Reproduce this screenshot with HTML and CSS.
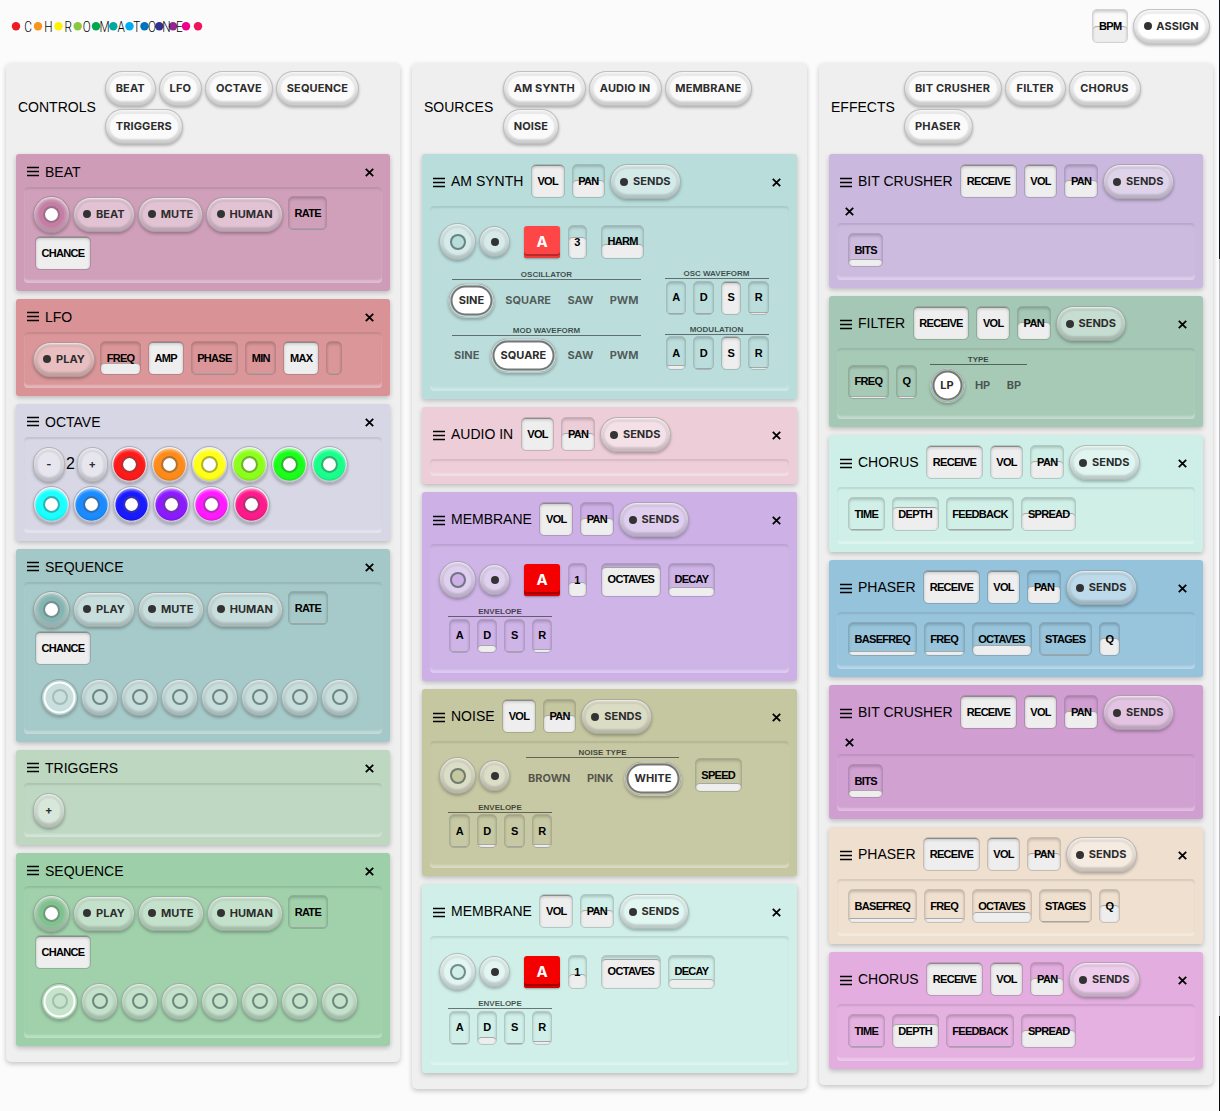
FILE: index.html
```html
<!DOCTYPE html>
<html lang="en">
<head>
<meta charset="utf-8">
<title>Chromatone</title>
<link rel="stylesheet" href="styles.css">
</head>
<body>
<svg class="defs" aria-hidden="true">
  <symbol id="menu" viewBox="0 0 12 11"><path d="M0 1.5h12M0 5.5h12M0 9.5h12" fill="none" stroke="#000" stroke-width="1.7"/></symbol>
  <symbol id="close" viewBox="0 0 9 9"><path d="M.8.8l7.4 7.4M8.2.8L.8 8.2" fill="none" stroke="#000" stroke-width="1.8"/></symbol>
</svg>
<header class="topbar">
  <svg class="logo" width="200" height="20" viewBox="0 0 200 20">
    <g><circle cx="10" cy="10.3" r="4.2" fill="#ed1c24"/><circle cx="32" cy="10.3" r="4.2" fill="#f7941d"/><circle cx="52.5" cy="10.3" r="4.2" fill="#fff200"/><circle cx="71.7" cy="10.3" r="4.2" fill="#8dc63f"/><circle cx="90" cy="10.3" r="4.2" fill="#00a651"/><circle cx="107.3" cy="10.3" r="4.2" fill="#00a99d"/><circle cx="123.5" cy="10.3" r="4.2" fill="#00aeef"/><circle cx="138.5" cy="10.3" r="4.2" fill="#0072bc"/><circle cx="153.3" cy="10.3" r="4.2" fill="#2e3192"/><circle cx="167" cy="10.3" r="4.2" fill="#92278f"/><circle cx="180" cy="10.3" r="4.2" fill="#ec008c"/><circle cx="192" cy="10.3" r="4.2" fill="#ed145b"/></g>
    <g class="logo-text" transform="scale(.8 1)"><text x="27.5" y="15.6">C</text><text x="53" y="15.6">H</text><text x="77.8" y="15.6">R</text><text x="101" y="15.6">O</text><text x="123.3" y="15.6">M</text><text x="144" y="15.6">A</text><text x="163.6" y="15.6">T</text><text x="182.5" y="15.6">O</text><text x="200.4" y="15.6">N</text><text x="216.6" y="15.6">E</text></g>
  </svg>
  <div class="param bpm" style="--v:51%"><b>BPM</b></div>
  <button class="pill dot">ASSIGN</button>
</header>

<main class="board">
  <section class="column">
    <div class="column-head"><h2>CONTROLS</h2><div class="adders"><button class="pill">BEAT</button><button class="pill">LFO</button><button class="pill">OCTAVE</button><button class="pill">SEQUENCE</button><button class="pill">TRIGGERS</button></div></div>

    <article class="card beat">
      <div class="card-head"><svg class="menu"><use href="#menu"/></svg><h3>BEAT</h3><span class="close"><svg><use href="#close"/></svg></span></div>
      <div class="panel">
        <div class="row"><i class="knob on"></i><button class="pill dot">BEAT</button><button class="pill dot">MUTE</button><button class="pill dot">HUMAN</button><div class="param" style="--v:0%"><b>RATE</b></div></div>
        <div class="row"><div class="param" style="--v:100%"><b>CHANCE</b></div></div>
      </div>
    </article>

    <article class="card lfo">
      <div class="card-head"><svg class="menu"><use href="#menu"/></svg><h3>LFO</h3><span class="close"><svg><use href="#close"/></svg></span></div>
      <div class="panel">
        <div class="row"><button class="pill dot">PLAY</button><div class="param" style="--v:35%"><b>FREQ</b></div><div class="param" style="--v:100%"><b>AMP</b></div><div class="param" style="--v:0%"><b>PHASE</b></div><div class="param" style="--v:0%"><b>MIN</b></div><div class="param" style="--v:100%"><b>MAX</b></div><div class="param blank" style="--v:0%"></div></div>
      </div>
    </article>

    <article class="card octave">
      <div class="card-head"><svg class="menu"><use href="#menu"/></svg><h3>OCTAVE</h3><span class="close"><svg><use href="#close"/></svg></span></div>
      <div class="panel">
        <div class="row"><button class="pill step">-</button><span class="count">2</span><button class="pill step">+</button><i class="knob note red"></i><i class="knob note orange"></i><i class="knob note yellow"></i><i class="knob note lime"></i><i class="knob note green"></i><i class="knob note mint"></i></div>
        <div class="row"><i class="knob note cyan"></i><i class="knob note azure"></i><i class="knob note blue"></i><i class="knob note violet"></i><i class="knob note magenta"></i><i class="knob note rose"></i></div>
      </div>
    </article>

    <article class="card sequence teal">
      <div class="card-head"><svg class="menu"><use href="#menu"/></svg><h3>SEQUENCE</h3><span class="close"><svg><use href="#close"/></svg></span></div>
      <div class="panel">
        <div class="row"><i class="knob on"></i><button class="pill dot">PLAY</button><button class="pill dot">MUTE</button><button class="pill dot">HUMAN</button><div class="param" style="--v:0%"><b>RATE</b></div></div>
        <div class="row"><div class="param" style="--v:100%"><b>CHANCE</b></div></div>
        <div class="row steps"><i class="knob current"></i><i class="knob"></i><i class="knob"></i><i class="knob"></i><i class="knob"></i><i class="knob"></i><i class="knob"></i><i class="knob"></i></div>
      </div>
    </article>

    <article class="card triggers">
      <div class="card-head"><svg class="menu"><use href="#menu"/></svg><h3>TRIGGERS</h3><span class="close"><svg><use href="#close"/></svg></span></div>
      <div class="panel"><div class="row"><button class="pill step">+</button></div></div>
    </article>

    <article class="card sequence leaf">
      <div class="card-head"><svg class="menu"><use href="#menu"/></svg><h3>SEQUENCE</h3><span class="close"><svg><use href="#close"/></svg></span></div>
      <div class="panel">
        <div class="row"><i class="knob on"></i><button class="pill dot">PLAY</button><button class="pill dot">MUTE</button><button class="pill dot">HUMAN</button><div class="param" style="--v:0%"><b>RATE</b></div></div>
        <div class="row"><div class="param" style="--v:100%"><b>CHANCE</b></div></div>
        <div class="row steps"><i class="knob current"></i><i class="knob"></i><i class="knob"></i><i class="knob"></i><i class="knob"></i><i class="knob"></i><i class="knob"></i><i class="knob"></i></div>
      </div>
    </article>
  </section>

  <section class="column sources">
    <div class="column-head"><h2>SOURCES</h2><div class="adders"><button class="pill">AM SYNTH</button><button class="pill">AUDIO IN</button><button class="pill">MEMBRANE</button><button class="pill">NOISE</button></div></div>

    <article class="card synth">
      <div class="card-head wide"><svg class="menu"><use href="#menu"/></svg><h3>AM SYNTH</h3><div class="param" style="--v:100%"><b>VOL</b></div><div class="param" style="--v:52%"><b>PAN</b></div><button class="pill dot">SENDS</button><span class="close"><svg><use href="#close"/></svg></span></div>
      <div class="panel">
        <div class="row voice"><i class="knob"></i><i class="knob small"></i><div class="pitch light">A</div><div class="param digit" style="--v:65%"><b>3</b></div><div class="param" style="--v:41%"><b>HARM</b></div></div>
        <div class="groups">
          <div class="radio"><div class="legend">OSCILLATOR</div><div class="options"><span class="active">SINE</span><span>SQUARE</span><span>SAW</span><span>PWM</span></div></div>
          <div class="envelope"><div class="legend">OSC WAVEFORM</div><div class="stages"><div class="param" style="--v:0%"><b>A</b></div><div class="param" style="--v:0%"><b>D</b></div><div class="param" style="--v:100%"><b>S</b></div><div class="param" style="--v:5%"><b>R</b></div></div></div>
        </div>
        <div class="groups">
          <div class="radio"><div class="legend">MOD WAVEFORM</div><div class="options"><span>SINE</span><span class="active">SQUARE</span><span>SAW</span><span>PWM</span></div></div>
          <div class="envelope"><div class="legend">MODULATION</div><div class="stages"><div class="param" style="--v:13%"><b>A</b></div><div class="param" style="--v:3%"><b>D</b></div><div class="param" style="--v:100%"><b>S</b></div><div class="param" style="--v:5%"><b>R</b></div></div></div>
        </div>
      </div>
    </article>

    <article class="card audio">
      <div class="card-head wide"><svg class="menu"><use href="#menu"/></svg><h3>AUDIO IN</h3><div class="param" style="--v:100%"><b>VOL</b></div><div class="param" style="--v:52%"><b>PAN</b></div><button class="pill dot">SENDS</button><span class="close"><svg><use href="#close"/></svg></span></div>
      <div class="panel"></div>
    </article>

    <article class="card membrane">
      <div class="card-head wide"><svg class="menu"><use href="#menu"/></svg><h3>MEMBRANE</h3><div class="param" style="--v:100%"><b>VOL</b></div><div class="param" style="--v:52%"><b>PAN</b></div><button class="pill dot">SENDS</button><span class="close"><svg><use href="#close"/></svg></span></div>
      <div class="panel">
        <div class="row voice"><i class="knob"></i><i class="knob small"></i><div class="pitch">A</div><div class="param digit" style="--v:43%"><b>1</b></div><div class="param" style="--v:88%"><b>OCTAVES</b></div><div class="param" style="--v:28%"><b>DECAY</b></div></div>
        <div class="groups"><div class="envelope"><div class="legend">ENVELOPE</div><div class="stages"><div class="param" style="--v:0%"><b>A</b></div><div class="param" style="--v:20%"><b>D</b></div><div class="param" style="--v:3%"><b>S</b></div><div class="param" style="--v:8%"><b>R</b></div></div></div></div>
      </div>
    </article>

    <article class="card noise">
      <div class="card-head wide"><svg class="menu"><use href="#menu"/></svg><h3>NOISE</h3><div class="param" style="--v:100%"><b>VOL</b></div><div class="param" style="--v:52%"><b>PAN</b></div><button class="pill dot">SENDS</button><span class="close"><svg><use href="#close"/></svg></span></div>
      <div class="panel">
        <div class="row labelled"><i class="knob"></i><i class="knob small"></i><div class="radio"><div class="legend">NOISE TYPE</div><div class="options"><span>BROWN</span><span>PINK</span><span class="active">WHITE</span></div></div><div class="param" style="--v:24%"><b>SPEED</b></div></div>
        <div class="groups"><div class="envelope"><div class="legend">ENVELOPE</div><div class="stages"><div class="param" style="--v:3%"><b>A</b></div><div class="param" style="--v:9%"><b>D</b></div><div class="param" style="--v:3%"><b>S</b></div><div class="param" style="--v:9%"><b>R</b></div></div></div></div>
      </div>
    </article>

    <article class="card membrane aqua">
      <div class="card-head wide"><svg class="menu"><use href="#menu"/></svg><h3>MEMBRANE</h3><div class="param" style="--v:100%"><b>VOL</b></div><div class="param" style="--v:52%"><b>PAN</b></div><button class="pill dot">SENDS</button><span class="close"><svg><use href="#close"/></svg></span></div>
      <div class="panel">
        <div class="row voice"><i class="knob"></i><i class="knob small"></i><div class="pitch">A</div><div class="param digit" style="--v:43%"><b>1</b></div><div class="param" style="--v:88%"><b>OCTAVES</b></div><div class="param" style="--v:28%"><b>DECAY</b></div></div>
        <div class="groups"><div class="envelope"><div class="legend">ENVELOPE</div><div class="stages"><div class="param" style="--v:0%"><b>A</b></div><div class="param" style="--v:20%"><b>D</b></div><div class="param" style="--v:3%"><b>S</b></div><div class="param" style="--v:8%"><b>R</b></div></div></div></div>
      </div>
    </article>
  </section>

  <section class="column effects">
    <div class="column-head"><h2>EFFECTS</h2><div class="adders"><button class="pill">BIT CRUSHER</button><button class="pill">FILTER</button><button class="pill">CHORUS</button><button class="pill">PHASER</button></div></div>

    <article class="card crusher">
      <div class="card-head wide"><svg class="menu"><use href="#menu"/></svg><h3>BIT CRUSHER</h3><div class="param" style="--v:100%"><b>RECEIVE</b></div><div class="param" style="--v:100%"><b>VOL</b></div><div class="param" style="--v:52%"><b>PAN</b></div><button class="pill dot">SENDS</button><span class="close"><svg><use href="#close"/></svg></span></div>
      <div class="panel"><div class="row"><div class="param" style="--v:21%"><b>BITS</b></div></div></div>
    </article>

    <article class="card filter">
      <div class="card-head wide"><svg class="menu"><use href="#menu"/></svg><h3>FILTER</h3><div class="param" style="--v:100%"><b>RECEIVE</b></div><div class="param" style="--v:100%"><b>VOL</b></div><div class="param" style="--v:52%"><b>PAN</b></div><button class="pill dot">SENDS</button><span class="close"><svg><use href="#close"/></svg></span></div>
      <div class="panel"><div class="row labelled"><div class="param" style="--v:4%"><b>FREQ</b></div><div class="param" style="--v:4%"><b>Q</b></div><div class="radio"><div class="legend">TYPE</div><div class="options"><span class="active">LP</span><span>HP</span><span>BP</span></div></div></div></div>
    </article>

    <article class="card chorus">
      <div class="card-head wide"><svg class="menu"><use href="#menu"/></svg><h3>CHORUS</h3><div class="param" style="--v:100%"><b>RECEIVE</b></div><div class="param" style="--v:100%"><b>VOL</b></div><div class="param" style="--v:52%"><b>PAN</b></div><button class="pill dot">SENDS</button><span class="close"><svg><use href="#close"/></svg></span></div>
      <div class="panel"><div class="row"><div class="param" style="--v:0%"><b>TIME</b></div><div class="param" style="--v:73%"><b>DEPTH</b></div><div class="param" style="--v:0%"><b>FEEDBACK</b></div><div class="param" style="--v:54%"><b>SPREAD</b></div></div></div>
    </article>

    <article class="card phaser">
      <div class="card-head wide"><svg class="menu"><use href="#menu"/></svg><h3>PHASER</h3><div class="param" style="--v:100%"><b>RECEIVE</b></div><div class="param" style="--v:100%"><b>VOL</b></div><div class="param" style="--v:52%"><b>PAN</b></div><button class="pill dot">SENDS</button><span class="close"><svg><use href="#close"/></svg></span></div>
      <div class="panel"><div class="row"><div class="param" style="--v:12%"><b>BASEFREQ</b></div><div class="param" style="--v:12%"><b>FREQ</b></div><div class="param" style="--v:30%"><b>OCTAVES</b></div><div class="param" style="--v:0%"><b>STAGES</b></div><div class="param" style="--v:53%"><b>Q</b></div></div></div>
    </article>

    <article class="card crusher orchid">
      <div class="card-head wide"><svg class="menu"><use href="#menu"/></svg><h3>BIT CRUSHER</h3><div class="param" style="--v:100%"><b>RECEIVE</b></div><div class="param" style="--v:100%"><b>VOL</b></div><div class="param" style="--v:52%"><b>PAN</b></div><button class="pill dot">SENDS</button><span class="close"><svg><use href="#close"/></svg></span></div>
      <div class="panel"><div class="row"><div class="param" style="--v:21%"><b>BITS</b></div></div></div>
    </article>

    <article class="card phaser sand">
      <div class="card-head wide"><svg class="menu"><use href="#menu"/></svg><h3>PHASER</h3><div class="param" style="--v:100%"><b>RECEIVE</b></div><div class="param" style="--v:100%"><b>VOL</b></div><div class="param" style="--v:52%"><b>PAN</b></div><button class="pill dot">SENDS</button><span class="close"><svg><use href="#close"/></svg></span></div>
      <div class="panel"><div class="row"><div class="param" style="--v:12%"><b>BASEFREQ</b></div><div class="param" style="--v:12%"><b>FREQ</b></div><div class="param" style="--v:30%"><b>OCTAVES</b></div><div class="param" style="--v:0%"><b>STAGES</b></div><div class="param" style="--v:53%"><b>Q</b></div></div></div>
    </article>

    <article class="card chorus pink">
      <div class="card-head wide"><svg class="menu"><use href="#menu"/></svg><h3>CHORUS</h3><div class="param" style="--v:100%"><b>RECEIVE</b></div><div class="param" style="--v:100%"><b>VOL</b></div><div class="param" style="--v:52%"><b>PAN</b></div><button class="pill dot">SENDS</button><span class="close"><svg><use href="#close"/></svg></span></div>
      <div class="panel"><div class="row"><div class="param" style="--v:0%"><b>TIME</b></div><div class="param" style="--v:73%"><b>DEPTH</b></div><div class="param" style="--v:0%"><b>FEEDBACK</b></div><div class="param" style="--v:54%"><b>SPREAD</b></div></div></div>
    </article>
  </section>
</main>
</body>
</html>
```
FILE: styles.css
```css
*, *::before, *::after { box-sizing: border-box; }
html { background: #fbfbfb; }
body {
  margin: 0;
  height: 1111px;
  overflow: hidden;
  background: #fbfbfb;
  color: #000;
  font-family: "Liberation Sans", Arial, sans-serif;
}
/* edge of the side drawer */
body::after {
  content: "";
  position: fixed;
  top: 0;
  right: 0;
  width: 1px;
  height: 100%;
  background: linear-gradient(#0c1118 259px, #b9b9bb 259px 1016px, #0c0c0c 1016px);
}
.defs { display: none; }
h2, h3 { margin: 0; font-size: 14px; font-weight: 400; line-height: 20px; white-space: nowrap; }

.topbar { display: flex; align-items: center; height: 63px; padding: 0 9px 11px 6px; }
.logo { margin-right: auto; }
.logo-text { font: 300 14.7px Roboto, sans-serif; text-anchor: middle; fill: #000; }

.board { display: grid; grid-template-columns: 394px 395px 394px; gap: 12px; align-items: start; padding-left: 6px; }
.column {
  display: flex;
  flex-direction: column;
  gap: 8px;
  padding: 0 10px 16px;
  border-radius: 5px;
  background: #efefef;
  box-shadow: 0 2px 5px rgba(0, 0, 0, .22);
}
.column-head { display: flex; align-items: center; height: 83px; padding: 4px 0 0 2px; }
.column-head h2 { width: 85.5px; }
.sources .column-head h2 { width: 77.5px; }
.effects .column-head h2 { width: 71px; }
.adders { display: flex; flex-wrap: wrap; gap: 3px 0; width: 275px; padding-top: 2px; }
.column-head .pill { --face: #fafafa; padding: 0 10.2px 0 9.7px; letter-spacing: .12px; }
.effects .column-head .pill { padding: 0 11px 0 10.4px; letter-spacing: .2px; }

.card {
  display: flex;
  flex-direction: column;
  border-radius: 3px;
  background: var(--bg);
  box-shadow: 0 2px 5px rgba(0, 0, 0, .22);
}
.card-head { display: flex; align-items: center; padding: 7px 11px 5px; min-height: 33px; }
.wide { flex-wrap: wrap; padding: 8px 11px 4px; }
.wide .pill { margin-top: 2px; margin-bottom: 3px; }
.wide .param { margin-top: 2px; margin-bottom: 4px; }
.menu { width: 12px; height: 11px; margin-right: 6px; }
.card-head h3 { margin-right: 4px; }
.wide h3 { height: 40px; line-height: 39px; }
.close { display: flex; align-items: center; justify-content: center; width: 19px; height: 17px; margin-left: auto; padding-top: 1px; }
.close svg { width: 9px; height: 9px; }
.crusher .close { margin-left: 0; }
.panel {
  flex: 1;
  margin: 0 8px 8px;
  padding: 7px 0 0 7.5px;
  border-radius: 4px;
  background: rgba(255, 255, 255, .04);
  box-shadow: inset 0 2px 2px rgba(0, 0, 0, .1), inset 0 -4px 2px -1px rgba(255, 255, 255, .3), inset 1px 0 1px rgba(255, 255, 255, .12), inset -1px 0 1px rgba(255, 255, 255, .12);
}
.row { display: flex; align-items: center; height: 40px; }
.row > .param { margin-bottom: 2px; }
.steps { margin: 8px 0 0 8px; }

.beat { --bg: #cf9cb8; min-height: 137px; }
.lfo { --bg: #d99295; min-height: 97px; }
.octave { --bg: #d7d6e5; min-height: 137px; }
.sequence { min-height: 193px; }
.teal { --bg: #a3c8c7; }
.leaf { --bg: #9dd0a8; }
.triggers { --bg: #bdd7c1; min-height: 95px; }
.synth { --bg: #b9dddb; min-height: 245px; }
.audio { --bg: #edcdd8; min-height: 77px; }
.membrane { --bg: #cdb1e6; min-height: 189px; }
.noise { --bg: #c5c7a1; min-height: 187px; }
.aqua { --bg: #cfefe8; }
.crusher { --bg: #cbb8de; min-height: 134px; }
.filter { --bg: #a4c8b5; min-height: 131px; }
.chorus { --bg: #ceefe7; min-height: 117px; }
.phaser { --bg: #94c3db; min-height: 117px; }
.orchid { --bg: #d09ed1; }
.sand { --bg: #efdfcf; }
.pink { --bg: #e3aedf; }

/* buttons */
.pill, .knob, .active {
  border: 1px solid rgba(60, 60, 60, .3);
  background: var(--face, rgba(255, 255, 255, .38));
  box-shadow: 0 2px 3px rgba(0, 0, 0, .25), inset 0 1px 2px rgba(255, 255, 255, .8), inset 0 0 1px 4px rgba(110, 110, 110, .12), inset 0 -3px 3px rgba(0, 0, 0, .14);
}
.pill {
  display: flex;
  align-items: center;
  flex: none;
  height: 35px;
  margin: 0 1.5px;
  padding: 0 9.2px 0 9.2px;
  border-radius: 18px;
  color: #2d2d2d;
  font: 700 11px/1 Inter, sans-serif;
  letter-spacing: .03px;
  white-space: nowrap;
}
.dot::before { content: ""; width: 8px; height: 8px; margin-right: 4.8px; border-radius: 50%; background: #333; }
.topbar .pill { --face: #fff; padding: 0 9.8px; }
.pill.step { justify-content: center; width: 31.5px; padding: 0; letter-spacing: 0; }
.count { width: 10px; margin: 0 -.5px; text-align: center; font-size: 16px; }

.knob {
  display: flex;
  flex: none;
  align-items: center;
  justify-content: center;
  width: 37px;
  height: 37px;
  margin: 0 1.5px;
  border-radius: 50%;
}
.knob::after {
  content: "";
  width: 16px;
  height: 16px;
  border: 2px solid rgba(50, 75, 70, .6);
  border-radius: 50%;
}
.sources .knob::after { background: var(--bg); }
.knob.small { width: 31px; height: 31px; }
.sources .knob.small::after { width: 8px; height: 8px; border: 0; background: #333; }
.current {
  background: radial-gradient(circle, rgba(255, 255, 255, .4) 13.5px, #fff 14.5px 15.5px, rgba(255, 255, 255, .15) 16.5px);
  box-shadow: 0 2px 3px rgba(0, 0, 0, .2);
}
.current::after { opacity: .4; }
.on::after { width: 17px; height: 17px; border: 2px solid rgba(90, 90, 90, .4); background: #fff; background-clip: padding-box; }
.beat .on { background: radial-gradient(circle, #c57da5 12px, #dcabc6 15.5px); }
.teal .on { background: radial-gradient(circle, #84b5b2 12px, #b4d3d1 15.5px); }
.leaf .on { background: radial-gradient(circle, #7fc28f 12px, #b2dbba 15.5px); }
.note { background: radial-gradient(circle, var(--c) 15.7px, #dedeea 16.5px); box-shadow: 0 2px 3px rgba(0, 0, 0, .25), inset 0 3px 3px rgba(255, 255, 255, .6), inset 0 -3px 2px rgba(0, 0, 0, .1); }
.note::after { width: 17px; height: 17px; border: 2px solid rgba(80, 80, 80, .45); background: #fff; background-clip: padding-box; }
.red { --c: #ff1a1a; }
.orange { --c: #ff8c1a; }
.yellow { --c: #ffff1a; }
.lime { --c: #8cff1a; }
.green { --c: #1aff1a; }
.mint { --c: #1aff8c; }
.cyan { --c: #1affff; }
.azure { --c: #1a8cff; }
.blue { --c: #1a1aff; }
.violet { --c: #8c1aff; }
.magenta { --c: #ff1aff; }
.rose { --c: #ff1a8c; }

/* value boxes: the fill height is the parameter value */
.param {
  position: relative;
  display: flex;
  align-items: center;
  justify-content: center;
  flex: none;
  height: 34px;
  margin: 0 3.5px;
  padding: 0 5.6px 1px;
  border: 1px solid rgba(70, 70, 70, .22);
  border-radius: 5px;
  overflow: hidden;
}
.param::before {
  content: "";
  position: absolute;
  left: 0;
  right: 0;
  bottom: 0;
  height: var(--v);
  border-top: 1px solid rgba(60, 60, 60, .4);
  border-radius: 4px;
  background: #eee;
}
.param::after {
  content: "";
  position: absolute;
  inset: 0;
  border-radius: 4px;
  box-shadow: inset 0 2px 3px rgba(0, 0, 0, .18), inset 0 0 1px rgba(0, 0, 0, .15);
}
.param b { position: relative; font-size: 11px; letter-spacing: -.7px; white-space: nowrap; }
.blank { width: 16px; }
.bpm { width: 36px; margin-right: 3px; background: #fafafa; }

.pitch {
  display: flex;
  align-items: center;
  justify-content: center;
  width: 36px;
  height: 32px;
  margin: 0 4px 0 12.5px;
  border-radius: 3px;
  background: #f50000;
  box-shadow: inset 0 -2px #d80000, inset 0 -4px #a50000, 0 1px 2px rgba(0, 0, 0, .3);
  color: #fff;
  font: 700 15px/1 Inter, sans-serif;
}
.light { background: #ff4646; box-shadow: inset 0 -2px #ee3d3d, inset 0 -4px #b52a2a, 0 1px 2px rgba(0, 0, 0, .3); }
.sources .row > .param, .effects .row > .param { margin-bottom: 0; }
.digit { width: 19px; margin-right: 11px; padding: 0; }
.voice { margin-top: 8.5px; }

.legend {
  height: 10px;
  border-bottom: 1px solid rgba(0, 0, 0, .5);
  color: rgba(0, 0, 0, .68);
  text-align: center;
  font-size: 8px;
  font-weight: 700;
  line-height: 10px;
  white-space: nowrap;
}
.groups { display: flex; margin: 7.5px 0 0 10.5px; }
.groups .radio { width: 196px; margin-right: 20.5px; }
.radio .legend { margin: 0 3px 2.5px 4px; }
.options { display: flex; align-items: center; gap: 4.4px; height: 35px; }
.options span { flex: none; padding: 0 6px; color: rgba(40, 40, 40, .72); font: 700 11px/1 Inter, sans-serif; letter-spacing: 0; white-space: nowrap; }
.options .active {
  display: flex;
  align-items: center;
  justify-content: center;
  height: 35px;
  min-width: 35px;
  padding: 0 9.8px;
  border-radius: 18px;
  color: #2d2d2d;
  background: #fff;
  box-shadow: 0 2px 3px rgba(0, 0, 0, .25), inset 0 0 0 1.5px var(--bg), inset 0 0 0 3.5px #777;
}
.filter .options .active { padding: 0; }
.envelope { width: 104px; }
.stages { display: flex; justify-content: space-between; padding: 1.5px 0 0 1px; }
.stages .param { width: 20.5px; margin: 0; padding: 0 0 1px; }

.panel .labelled { align-items: flex-end; height: 56px; margin-top: -7.5px; }
.labelled .knob { margin-bottom: 2.5px; }
.labelled .knob.small { margin-bottom: 5.5px; }
.labelled .radio { margin: 0 9px 1px 10.5px; }
.panel .labelled > .param { margin-bottom: 4.5px; }
.noise .groups { margin-top: 6px; }
.effects .labelled .legend { margin-left: 0; margin-right: 0; }
.effects .labelled .radio { margin-left: 9px; }
.filter .panel .labelled > .param { margin-bottom: 5px; }
.synth .groups { margin-top: 8.5px; }
.synth .groups + .groups { margin-top: 8px; }
.synth .envelope { margin-top: -1px; }
```
